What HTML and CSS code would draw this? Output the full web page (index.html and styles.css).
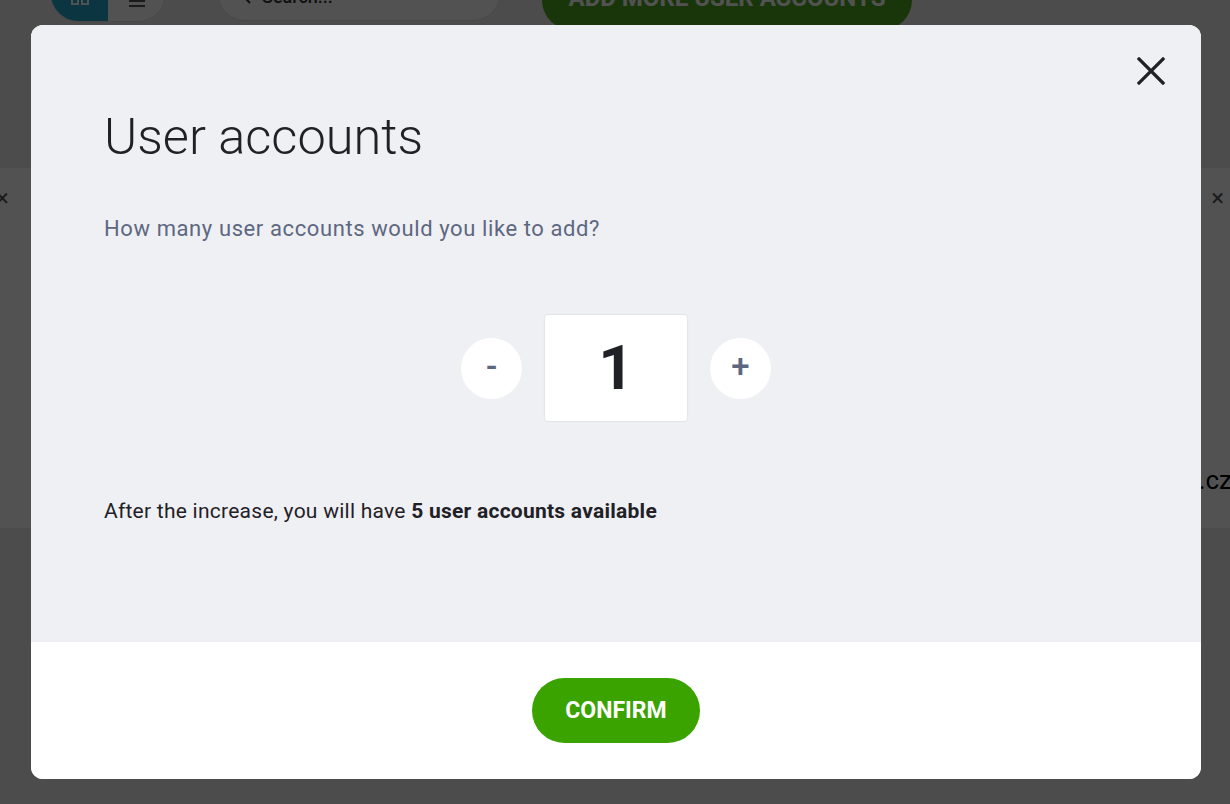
FILE: index.html
```html
<!DOCTYPE html>
<html lang="en">
<head>
<meta charset="utf-8">
<title>User accounts</title>
<link rel="stylesheet" href="styles.css">
</head>
<body>
<div class="page">
  <header class="toolbar">
    <div class="view-toggle">
      <span class="view-btn active">
        <svg width="18" height="18" viewBox="0 0 18 18"><rect x="1" y="1" width="6" height="6" fill="none" stroke="#fff" stroke-width="2"/><rect x="11" y="1" width="6" height="6" fill="none" stroke="#fff" stroke-width="2"/></svg>
      </span>
      <span class="view-btn">
        <svg width="20" height="18" viewBox="0 0 20 18"><path d="M2 4h16M2 9h16" stroke="#555" stroke-width="2"/></svg>
      </span>
    </div>
    <div class="search">
      <svg width="18" height="18" viewBox="0 0 18 18"><circle cx="7" cy="5" r="5" fill="none" stroke="#333" stroke-width="2"/><path d="M11 9l5 5" stroke="#333" stroke-width="2"/></svg>
      <span>Search...</span>
    </div>
    <button class="add-btn">ADD MORE USER ACCOUNTS</button>
  </header>
  <section class="band">
    <div class="band-row">
      <span class="band-x">&times;</span>
      <span class="band-x">&times;</span>
    </div>
    <div class="band-domain">info@firma.cz</div>
  </section>
</div>

<div class="overlay">
  <div class="modal">
    <div class="modal-body">
      <button class="close" aria-label="Close">
        <svg width="28" height="28" viewBox="0 0 28 28"><path d="M2 2L26 26M26 2L2 26" stroke="#1f2126" stroke-width="3.2" stroke-linecap="square"/></svg>
      </button>
      <h1 class="title">User accounts</h1>
      <p class="question">How many user accounts would you like to add?</p>
      <div class="counter">
        <button class="step">-</button>
        <div class="value">1</div>
        <button class="step">+</button>
      </div>
      <p class="summary">After the increase, you will have <strong>5 user accounts available</strong></p>
    </div>
    <div class="modal-footer">
      <button class="confirm">CONFIRM</button>
    </div>
  </div>
</div>
</body>
</html>
```

FILE: styles.css
```css
* { box-sizing: border-box; }
html, body { margin: 0; padding: 0; }
body {
  width: 1230px;
  height: 804px;
  overflow: hidden;
  font-family: Roboto, "Liberation Sans", Arial, sans-serif;
  background: #e9ebea;
}
.page {
  position: relative;
  height: 804px;
}
.toolbar {
  display: flex;
  align-items: flex-end;
  height: 24px;
  padding-left: 50px;
}
.view-toggle {
  display: flex;
  width: 116px;
  height: 56px;
  border-radius: 28px;
  background: #fff;
  border: 1px solid #ddd;
  overflow: hidden;
  flex-shrink: 0;
  margin-bottom: 2px;
}
.view-btn {
  width: 57px;
  display: flex;
  align-items: flex-start;
  justify-content: center;
  padding-top: 30px;
}
.view-btn.active { background: #22a6c8; }
.search {
  margin-left: 51px;
  width: 284px;
  height: 56px;
  border-radius: 28px;
  background: #fff;
  border: 1px solid #ddd;
  display: flex;
  align-items: flex-end;
  padding: 0 0 13px 16px;
  gap: 10px;
  font-size: 18px;
  font-weight: 500;
  color: #333;
  flex-shrink: 0;
  margin-bottom: 3px;
}
.add-btn {
  margin-left: 41px;
  width: 370px;
  height: 60px;
  border-radius: 30px;
  border: 0;
  background: #4fa521;
  color: #fff;
  font: 700 24px Roboto, sans-serif;
  line-height: 1;
  padding: 16px 0 0;
  flex-shrink: 0;
  margin-bottom: -6px;
  display: flex;
  align-items: flex-start;
  justify-content: center;
}
.band {
  margin-top: 144px;
  height: 360px;
  background: #fff;
  padding-top: 18px;
}
.band-row {
  display: flex;
  justify-content: space-between;
  font-size: 24px;
  line-height: 24px;
  color: #555;
  margin-left: -4px;
  margin-right: 6px;
}
.band-domain {
  text-align: right;
  font-size: 26px;
  color: #000;
  margin-top: 255px;
  margin-right: -2px;
}

.overlay {
  position: fixed;
  inset: 0;
  background: rgba(0, 0, 0, 0.68);
  padding: 25px 29px 25px 31px;
}
.modal {
  width: 1170px;
  height: 754px;
  border-radius: 12px;
  overflow: hidden;
  display: flex;
  flex-direction: column;
  background: #fff;
}
.modal-body {
  position: relative;
  height: 617px;
  background: #eff0f4;
  padding: 82px 73px 0 73px;
}
.close {
  position: absolute;
  top: 32px;
  right: 36px;
  width: 28px;
  height: 28px;
  padding: 0;
  border: 0;
  background: none;
  display: block;
}
.title {
  margin: 0;
  font-weight: 300;
  font-size: 50.5px;
  line-height: 60px;
  color: #1f2126;
}
.question {
  margin: 48px 0 0;
  font-size: 22px;
  letter-spacing: 0.6px;
  line-height: 28px;
  color: #5e6780;
}
.counter {
  display: flex;
  justify-content: center;
  align-items: center;
  gap: 23px;
  margin-top: 72px;
}
.step {
  width: 61px;
  height: 61px;
  border-radius: 50%;
  border: 0;
  background: #fff;
  color: #5e6780;
  font: 500 33px Roboto, sans-serif;
  line-height: 1;
  padding: 0 0 3px;
  display: flex;
  align-items: center;
  justify-content: center;
}
.value {
  width: 142px;
  height: 106px;
  background: #fff;
  border-radius: 3px;
  box-shadow: 0 0 2px rgba(0, 0, 0, 0.15);
  display: flex;
  align-items: center;
  justify-content: center;
  font-size: 62px;
  font-weight: 700;
  line-height: 1;
  color: #1f2126;
}
.summary {
  margin: 76px 0 0;
  font-size: 21px;
  letter-spacing: 0.25px;
  line-height: 28px;
  color: #1f2126;
}
.summary strong { font-weight: 700; }
.modal-footer {
  flex: 1;
  display: flex;
  align-items: center;
  justify-content: center;
  background: #fff;
}
.confirm {
  width: 168px;
  height: 65px;
  border-radius: 33px;
  border: 0;
  background: #3aa300;
  color: #fff;
  font: 700 23px Roboto, sans-serif;
  padding: 0;
}
```
